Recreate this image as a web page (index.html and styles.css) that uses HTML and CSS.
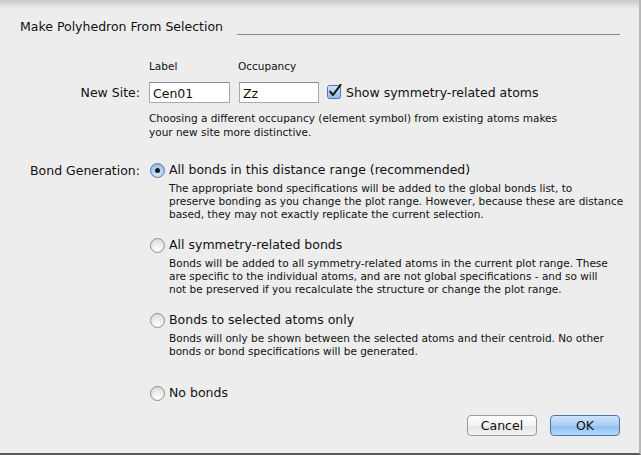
FILE: index.html
```html
<!DOCTYPE html>
<html lang="en">
<head>
  <meta charset="UTF-8">
  <title>Make Polyhedron From Selection</title>
  <link rel="stylesheet" href="styles.css">
</head>
<body>
  <div class="sheet">

    <div class="title-row">
      <span class="title">Make Polyhedron From Selection</span>
      <span class="rule"></span>
    </div>

    <div class="site">
      <div class="heads">
        <span class="head-label">Label</span>
        <span class="head-occ">Occupancy</span>
      </div>
      <div class="row">
        <span class="row-label">New Site:</span>
        <div class="fields">
          <input class="field field-label" type="text" value="Cen01">
          <input class="field field-occ" type="text" value="Zz">
          <label class="check">
            <span class="checkbox">
              <svg width="15" height="15" viewBox="0 0 15 15">
                <defs>
                  <linearGradient id="cb" x1="0" y1="0" x2="0" y2="1">
                    <stop offset="0" stop-color="#d6e6f8"/>
                    <stop offset="1" stop-color="#8fb8e8"/>
                  </linearGradient>
                </defs>
                <rect x="0.5" y="1.5" width="13" height="13" rx="2" fill="url(#cb)" stroke="#5877a6"/>
                <path d="M3.2 7.6 L6 11 L13.5 0.8" fill="none" stroke="#1b1b1b" stroke-width="2.1" stroke-linecap="round" stroke-linejoin="round"/>
              </svg>
            </span>
            Show symmetry-related atoms
          </label>
        </div>
      </div>
      <p class="help">Choosing a different occupancy (element symbol) from existing atoms makes<br>your new site more distinctive.</p>
    </div>

    <div class="bonds">
      <span class="row-label bonds-label">Bond Generation:</span>
      <div class="options">
        <div class="option">
          <span class="radio on"></span>
          <span class="opt-text">All bonds in this distance range (recommended)</span>
          <p class="desc">The appropriate bond specifications will be added to the global bonds list, to<br>preserve bonding as you change the plot range. However, because these are distance<br>based, they may not exactly replicate the current selection.</p>
        </div>
        <div class="option">
          <span class="radio"></span>
          <span class="opt-text">All symmetry-related bonds</span>
          <p class="desc">Bonds will be added to all symmetry-related atoms in the current plot range. These<br>are specific to the individual atoms, and are not global specifications - and so will<br>not be preserved if you recalculate the structure or change the plot range.</p>
        </div>
        <div class="option">
          <span class="radio"></span>
          <span class="opt-text">Bonds to selected atoms only</span>
          <p class="desc">Bonds will only be shown between the selected atoms and their centroid. No other<br>bonds or bond specifications will be generated.</p>
        </div>
        <div class="option last">
          <span class="radio"></span>
          <span class="opt-text">No bonds</span>
        </div>
      </div>
    </div>

    <div class="buttons">
      <button class="btn">Cancel</button>
      <button class="btn default">OK</button>
    </div>

  </div>
</body>
</html>
```

FILE: styles.css
```css
* {
  box-sizing: border-box;
  font-family: 'DejaVu Sans', 'Liberation Sans', sans-serif;
}

body {
  margin: 0;
  background-color: #ededed;
}

.sheet {
  width: 641px;
  height: 455px;
  background: linear-gradient(#c9c9c9, #ededed 9px) no-repeat;
  background-color: #ededed;
  border-right: 2px solid #b8b8b8;
  border-bottom: 2px solid #5a5a5a;
  display: flex;
  flex-direction: column;
  color: #111;
}

.title-row {
  display: flex;
  align-items: flex-end;
  padding: 19px 19px 0 20px;
  gap: 14px;
}

.title {
  font-size: 12.5px;
  line-height: 16px;
}

.rule {
  flex: 1;
  height: 1px;
  background-color: #8a8a8a;
}

.site {
  margin-top: 24px;
}

.heads {
  display: flex;
  padding-left: 149px;
  font-size: 10.5px;
  line-height: 14px;
}

.head-label {
  width: 89px;
}

.row {
  display: flex;
  align-items: center;
  margin-top: 9px;
}

.row-label {
  width: 140px;
  text-align: right;
  font-size: 12.5px;
}

.fields {
  display: flex;
  align-items: center;
  margin-left: 9px;
}

.field {
  height: 21px;
  border: 1px solid #a8a8a8;
  border-top-color: #8c8c8c;
  background-color: #fff;
  font-size: 12.5px;
  padding: 1px 3px 0;
  color: #111;
  outline: none;
}

.field-label {
  width: 81px;
  margin-right: 9px;
}

.field-occ {
  width: 80px;
  margin-right: 8px;
}

.check {
  display: flex;
  align-items: center;
  gap: 4px;
  font-size: 12.5px;
}

.checkbox {
  display: flex;
  width: 15px;
  height: 15px;
  margin-top: -2px;
}

.help {
  margin: 8px 0 0 149px;
  font-size: 10.5px;
  line-height: 14px;
}

.bonds {
  display: flex;
  margin-top: 23px;
}

.bonds-label {
  line-height: 16px;
  padding-top: 1px;
}

.options {
  margin-left: 10px;
  display: flex;
  flex-direction: column;
  gap: 16px;
}

.option {
  display: grid;
  grid-template-columns: 19px auto;
  align-items: center;
}

.radio {
  width: 15px;
  height: 15px;
  border-radius: 50%;
  border: 1px solid #8f8f8f;
  background: radial-gradient(circle at 50% 80%, #ffffff, #e6e6e6 60%, #d2d2d2);
  display: flex;
  align-items: center;
  justify-content: center;
}

.radio.on {
  border-color: #5d79a6;
  background: radial-gradient(circle at 50% 75%, #d9eafc, #a8c8ee 60%, #7ca6dc);
}

.radio.on::after {
  content: '';
  width: 5px;
  height: 5px;
  border-radius: 50%;
  background-color: #1a1a1a;
}

.opt-text {
  font-size: 12.5px;
  line-height: 16px;
}

.desc {
  grid-column: 2;
  margin: 4px 0 0;
  font-size: 10.5px;
  line-height: 13px;
}

.option.last {
  margin-top: 11px;
}

.buttons {
  display: flex;
  justify-content: flex-end;
  gap: 13px;
  padding-right: 19px;
  margin-top: 14px;
}

.btn {
  width: 70px;
  height: 21px;
  font-size: 12.5px;
  border-radius: 4px;
  border: 1px solid #9a9a9a;
  background: linear-gradient(#ffffff, #f3f3f3 50%, #e4e4e4 51%, #f2f2f2);
  color: #111;
  padding: 0;
}

.btn.default {
  border-color: #5073a8;
  background: linear-gradient(#cfe3fa, #a9cdf4 50%, #8dbcf0 51%, #b7dafc);
}
```
